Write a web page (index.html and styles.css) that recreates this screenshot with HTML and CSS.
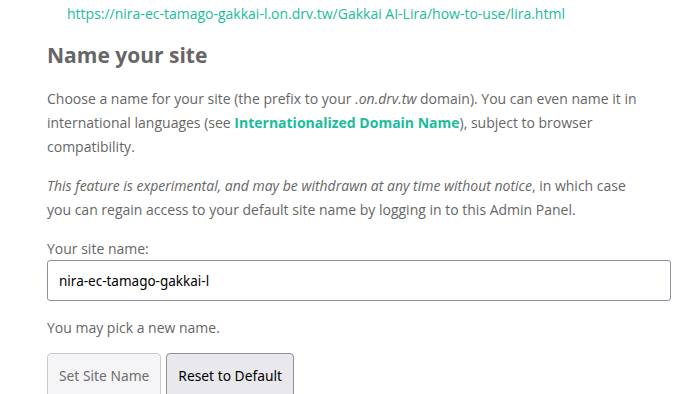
FILE: index.html
```html
<!DOCTYPE html>
<html lang="en">
<head>
<meta charset="utf-8">
<title>Name your site</title>
<link rel="stylesheet" href="styles.css">
</head>
<body>
<div class="page">
  <p class="url">https://nira-ec-tamago-gakkai-l.on.drv.tw/Gakkai AI-Lira/how-to-use/lira.html</p>
  <h2 class="title">Name your site</h2>
  <p class="text">Choose a name for your site (the prefix to your <em>.on.drv.tw</em> domain). You can even name it in international languages (see <a class="link" href="#">Internationalized Domain Name</a>), subject to browser compatibility.</p>
  <p class="text"><em>This feature is experimental, and may be withdrawn at any time without notice</em>, in which case you can regain access to your default site name by logging in to this Admin Panel.</p>
  <label class="label" for="site">Your site name:</label>
  <input class="field" id="site" type="text" value="nira-ec-tamago-gakkai-l">
  <p class="hint">You may pick a new name.</p>
  <div class="buttons">
    <button class="btn" disabled>Set Site Name</button>
    <button class="btn">Reset to Default</button>
  </div>
</div>
</body>
</html>
```
FILE: styles.css
```css
html, body {
  margin: 0;
  padding: 0;
  background: #fff;
  overflow: hidden;
}
.page {
  padding: 0 22px 0 47px;
  font-family: "Open Sans", "Noto Sans", sans-serif;
  color: #666;
  font-size: 14px;
}
.url {
  margin: 0;
  padding: 4px 0 0 20px;
  line-height: 20px;
  color: #1abc9c;
  white-space: nowrap;
}
.title {
  margin: 17px 0 0;
  font-size: 21px;
  line-height: 28px;
  font-weight: 700;
  color: #666;
}
.text {
  max-width: 600px;
  margin: 18px 0 0;
  line-height: 24px;
}
.text + .text {
  margin-top: 15px;
}
.link {
  color: #1abc9c;
  font-weight: 700;
  text-decoration: none;
}
.label {
  display: block;
  margin-top: 17px;
  line-height: 20px;
}
.field {
  display: block;
  box-sizing: border-box;
  width: 624px;
  height: 41px;
  margin: 1px 0 0;
  padding: 0 11px;
  border: 1px solid #8f8f9d;
  border-radius: 3px;
  font-family: "Noto Sans", sans-serif;
  font-size: 13.5px;
  color: #000;
  background: #fff;
}
.hint {
  margin: 17px 0 0;
  line-height: 20px;
}
.buttons {
  display: flex;
  gap: 5px;
  margin-top: 15px;
}
.btn {
  box-sizing: border-box;
  height: 45px;
  padding: 0 11px;
  border: 1px solid #8f8f9d;
  border-radius: 4px;
  background: #e9e9ed;
  font-family: "Noto Sans", sans-serif;
  font-size: 13.8px;
  color: #000;
}
.btn:disabled {
  background: #f5f5f7;
  border-color: #c9c9d0;
  color: #6d6d6d;
}
```
